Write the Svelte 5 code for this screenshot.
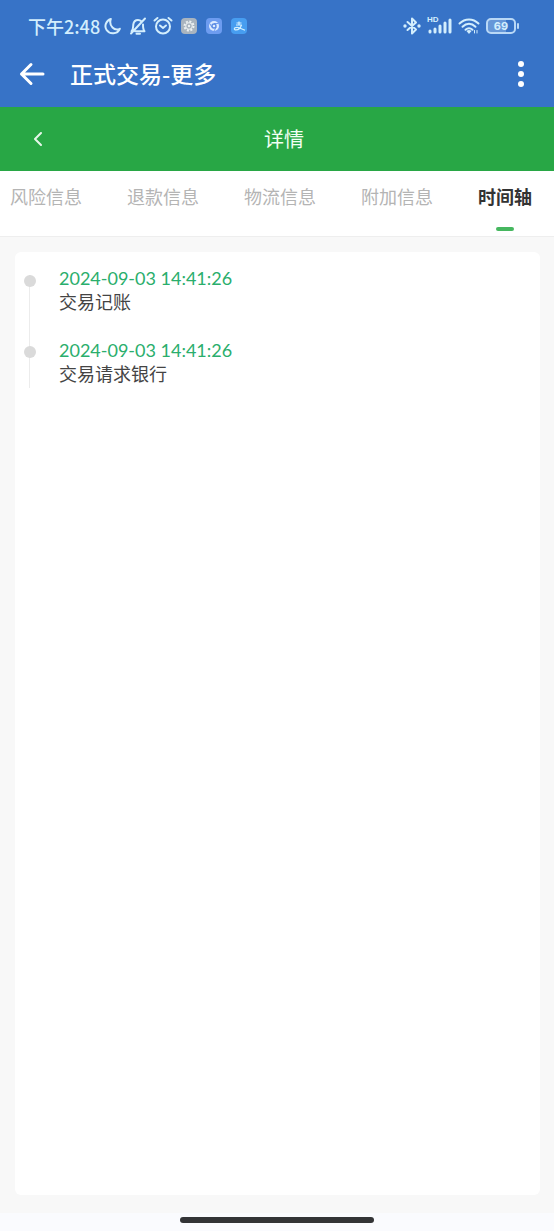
<script>
  const tabs = ["风险信息", "退款信息", "物流信息", "附加信息", "时间轴"]

  const records = [
    { time: "2024-09-03 14:41:26", text: "交易记账" },
    { time: "2024-09-03 14:41:26", text: "交易请求银行" },
  ]

  let active = $state("时间轴")
</script>

<div class="page">
  <header class="top">
    <div class="status">
      <div class="statusLeft">
        <span class="clock">下午2:48</span>
        <svg class="moon" width="17" height="18" viewBox="0 0 17 18">
          <path d="M6.800 2C2 3.500 0 9 2.600 13C5.500 17.500 13.500 17.500 15.800 11.800C13.500 12.800 10.500 12.500 8.500 10.500C6.500 8.500 5.800 5 6.800 2Z" />
        </svg>
        <svg class="bell" width="18" height="18" viewBox="0 0 18 18">
          <path d="M2.500 14.200C4.500 12.500 4 10 4.300 7.500C4.700 4.800 6.500 3 9 3C10.300 3 11.500 3.500 12.300 4.300M14 7.500C14 10.500 14 12.500 15.500 14.200H6M7.500 16.700H11M16 1.500L2 16.500" />
        </svg>
        <svg class="alarm" width="20" height="20" viewBox="0 0 20 20">
          <circle cx="10" cy="10.500" r="7" />
          <path d="M1.500 4.500L4.500 2M18.500 4.500L15.500 2M7 9.500L10 12L13 9.500" />
        </svg>
        <svg class="app" width="16" height="16" viewBox="0 0 16 16">
          <rect width="16" height="16" rx="4" fill="#a9b4bf" />
          <circle cx="8" cy="8" r="4.500" fill="none" stroke="#edf2f3" stroke-width="2" stroke-dasharray="2 1.500" />
          <circle cx="8" cy="8" r="3.300" fill="none" stroke="#edf2f3" stroke-width="1" />
          <circle cx="8" cy="8" r="1.200" fill="#edf2f3" />
        </svg>
        <svg class="app" width="16" height="16" viewBox="0 0 16 16">
          <rect width="16" height="16" rx="4" fill="#6d9cf0" />
          <circle cx="8" cy="8" r="5" fill="#dcecff" />
          <path d="M8 5.500H12.500M5.800 9.200L3.800 5.500M10.200 9.200L8 13" stroke="#6d9cf0" stroke-width="1" />
          <circle cx="8" cy="8" r="2" fill="#dcecff" stroke="#5c8ce4" stroke-width="1.400" />
        </svg>
        <svg class="app" width="16" height="16" viewBox="0 0 16 16">
          <rect width="16" height="16" rx="4" fill="#479df0" />
          <path d="M5.500 5H10.500M8 3.500V7M5 7H10.500C9.500 10 7 12.300 4 11.800C2 10.500 5 8.500 8 9.700L14 12.300" fill="none" stroke="#d5f0ff" stroke-width="1.200" />
        </svg>
      </div>
      <div class="statusRight">
        <svg width="18" height="20" viewBox="0 0 18 20">
          <path d="M4.500 6L13 13.500L9 17.500V2.500L13 6.500L4.500 14" />
          <circle class="dot" cx="2" cy="10" r="1.700" />
          <circle class="dot" cx="16" cy="10" r="1.700" />
        </svg>
        <div class="signal">
          <span class="hd">HD</span>
          <svg width="25" height="20" viewBox="0 0 25 20">
            <path class="bars" d="M3 15V16M8 13V16M13 10V16M18 7V16M23 4V16" />
          </svg>
        </div>
        <svg width="22" height="20" viewBox="0 0 22 20">
          <path d="M1.500 7.500C7 2 15 2 20.500 7.500M4.500 10.800C8.500 6.800 13.500 6.800 17.500 10.800" />
          <path d="M7.500 13.800C9.700 11.800 12.300 11.800 14.500 13.800" />
          <path class="dot" d="M8.500 15C10 13.800 12 13.800 13.500 15L11 18Z" />
          <path class="thin" d="M16.500 14.500V17M19 17V14.500" />
        </svg>
        <div class="battery"><span>69</span></div>
      </div>
    </div>
    <div class="titleBar">
      <button class="back" aria-label="返回">
        <svg width="26" height="24" viewBox="0 0 26 24">
          <path d="M12 2.500L2.500 12L12 21.500M2.500 12H24" />
        </svg>
      </button>
      <h1>正式交易-更多</h1>
      <button class="more" aria-label="更多">
        <svg width="6" height="28" viewBox="0 0 6 28">
          <circle cx="3" cy="4" r="3" />
          <circle cx="3" cy="14" r="3" />
          <circle cx="3" cy="24" r="3" />
        </svg>
      </button>
    </div>
  </header>

  <div class="subBar">
    <button aria-label="上一页">
      <svg width="8" height="14" viewBox="0 0 8 14">
        <path d="M7 1L1 7L7 13" />
      </svg>
    </button>
    <h2>详情</h2>
  </div>

  <nav class="tabs">
    {#each tabs as tab}
      <button class="tab" class:active={tab === active} onclick={() => (active = tab)}>{tab}</button>
    {/each}
  </nav>

  <main>
    <ul class="card">
      {#each records as record}
        <li>
          <div class="rail"></div>
          <div class="record">
            <time>{record.time}</time>
            <p>{record.text}</p>
          </div>
        </li>
      {/each}
    </ul>
  </main>

  <footer>
    <div class="pill"></div>
  </footer>
</div>

<style>
  :global(body) {
    margin: 0;
    background: #f8f8f8;
  }
  .page {
    display: flex;
    flex-direction: column;
    min-height: 100vh;
    font-family: "Noto Sans CJK SC", sans-serif;
    color: #444;
  }
  button {
    padding: 0;
    border: none;
    background: none;
    font-family: inherit;
    cursor: pointer;
  }
  svg {
    display: block;
    flex: none;
    fill: none;
    stroke: currentColor;
    stroke-width: 2;
    stroke-linecap: round;
    stroke-linejoin: round;
  }
  h1,
  h2,
  p,
  ul {
    margin: 0;
  }

  .top {
    padding-bottom: 12px;
    background: #3773c7;
  }
  .status {
    display: flex;
    align-items: center;
    justify-content: space-between;
    height: 52px;
    padding: 0 38px 0 28px;
    color: #d3eefd;
  }
  .statusLeft,
  .statusRight {
    display: flex;
    align-items: center;
  }
  .clock {
    margin-right: 4px;
    font-size: 18px;
    font-weight: 500;
    line-height: 24px;
  }
  .bell {
    margin-left: 8px;
  }
  .alarm {
    margin-left: 6px;
  }
  .app {
    margin-left: 8px;
    stroke: none;
    stroke-linecap: butt;
  }
  .app + .app {
    margin-left: 9px;
  }
  .statusRight {
    gap: 6px;
  }
  .dot {
    fill: currentColor;
    stroke: none;
  }
  .bars {
    stroke-width: 3;
  }
  .thin {
    stroke-width: 1;
  }
  .signal {
    position: relative;
  }
  .hd {
    position: absolute;
    top: 0;
    left: 0;
    font-family: "Liberation Sans", sans-serif;
    font-size: 8px;
    font-weight: 700;
    line-height: 8px;
  }
  .battery {
    position: relative;
    box-sizing: border-box;
    width: 30px;
    height: 16px;
    border: 2px solid #b9d8f6;
    border-radius: 5px;
    background: linear-gradient(90deg, #6697d8 69%, transparent 69%);
    font-family: Inter, sans-serif;
    font-size: 11px;
    font-weight: 700;
    line-height: 12px;
    text-align: center;
  }
  .battery::after {
    content: "";
    position: absolute;
    top: 3px;
    right: -5px;
    width: 2px;
    height: 6px;
    border-radius: 1px;
    background: #b9d8f6;
  }

  .titleBar {
    display: flex;
    align-items: center;
    height: 43px;
    padding: 0 30px 0 19px;
    color: #fff;
  }
  .back,
  .more {
    color: #fff;
  }
  .back svg {
    stroke-width: 3;
  }
  h1 {
    flex: 1;
    margin: 0 0 2px 25px;
    font-size: 23px;
    font-weight: 500;
    line-height: 32px;
  }
  .more circle {
    fill: currentColor;
    stroke: none;
  }

  .subBar {
    display: grid;
    grid-template-columns: 1fr auto 1fr;
    align-items: center;
    height: 64px;
    padding: 0 20px 0 34px;
    background: #28a745;
  }
  .subBar button {
    justify-self: start;
    color: #e6f7e9;
  }
  h2 {
    color: #f2fff4;
    font-size: 20px;
    font-weight: 400;
    line-height: 28px;
  }

  .tabs {
    display: flex;
    gap: 45px;
    height: 65px;
    padding: 0 10px;
    border-bottom: 1px solid #eee;
    background: #fff;
    overflow: hidden;
  }
  .tab {
    position: relative;
    flex: none;
    padding-bottom: 16px;
    color: #b4b4b4;
    font-size: 18px;
    line-height: 24px;
  }
  .active {
    color: #333;
    font-weight: 700;
  }
  .active::after {
    content: "";
    position: absolute;
    bottom: 5px;
    left: 50%;
    width: 18px;
    height: 4px;
    margin-left: -9px;
    border-radius: 2px;
    background: #46b75f;
  }

  main {
    display: flex;
    flex: 1;
    padding: 15px 14px 18px 15px;
  }
  .card {
    flex: 1;
    padding: 14px 9px;
    border-radius: 6px;
    background: #fff;
    list-style: none;
  }
  li {
    display: flex;
    gap: 23px;
    height: 72px;
  }
  .rail {
    position: relative;
    width: 12px;
    background: linear-gradient(#ececec, #ececec) 5px 0 / 1px 100% no-repeat;
  }
  li:first-child .rail {
    margin-top: 9px;
  }
  li:last-child .rail {
    height: 50px;
  }
  .rail::before {
    content: "";
    position: absolute;
    top: 8px;
    left: 0;
    width: 12px;
    height: 12px;
    border-radius: 50%;
    background: #dadada;
  }
  li:first-child .rail::before {
    top: 0;
  }
  time {
    display: block;
    color: #2aae6c;
    font-family: Lato, sans-serif;
    font-size: 18px;
    line-height: 24px;
  }
  .record p {
    font-size: 18px;
    line-height: 22px;
  }

  footer {
    padding: 4px 0 8px;
    background: #fafbfe;
  }
  .pill {
    width: 35%;
    height: 6px;
    margin: 0 auto;
    border-radius: 3px;
    background: #333436;
  }
</style>
